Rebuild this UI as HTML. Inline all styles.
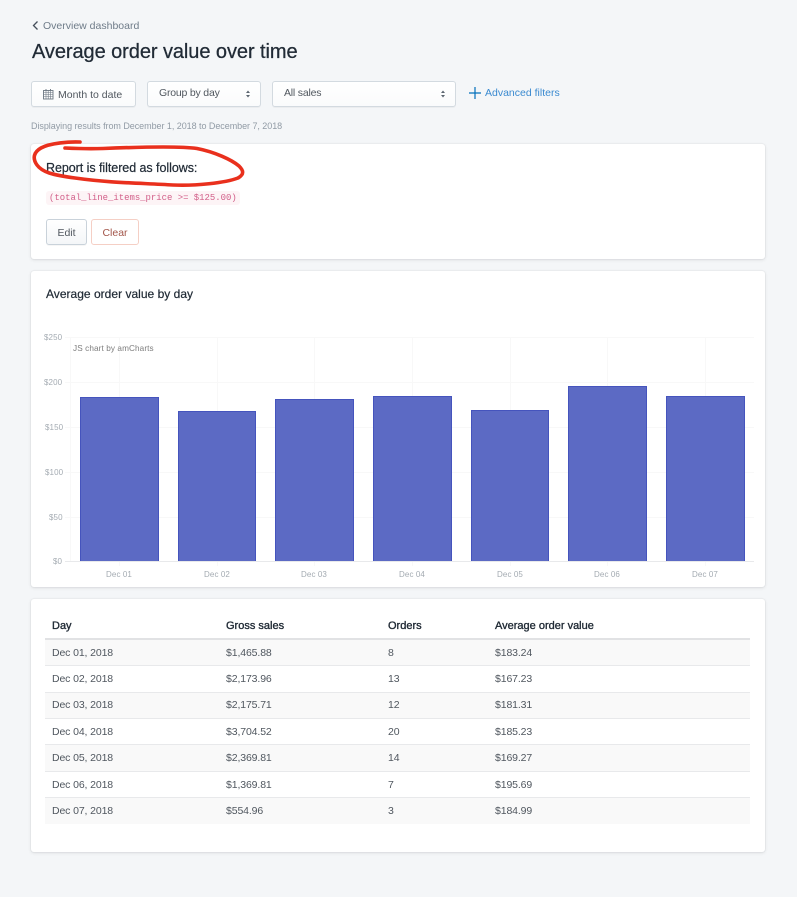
<!DOCTYPE html>
<html><head><meta charset="utf-8">
<style>
html,body{margin:0;padding:0}
body{width:797px;height:897px;background:#f4f6f8;position:relative;overflow:hidden;font-family:"Liberation Sans",sans-serif;color:#454f5b}
.t{position:absolute;white-space:nowrap;line-height:14px}
.card{position:absolute;left:31px;width:734px;background:#fff;border-radius:3px;box-shadow:0 0 0 1px rgba(63,63,68,.03),0 1px 3px 0 rgba(63,63,68,.13)}
.btn{position:absolute;box-sizing:border-box;border:1px solid #d3dae0;border-radius:3px;background:linear-gradient(#fff,#fafbfc);box-shadow:0 1px 0 rgba(22,29,37,.04)}
.h{font-size:11px;color:#212b36;-webkit-text-stroke:.35px #212b36}
.c{font-size:10.5px;color:#50575f;letter-spacing:-.12px}
.ax{font-size:8px;color:#a4abb2;letter-spacing:.1px}
.xl{text-align:center;width:60px}
.bar{position:absolute;box-sizing:border-box;background:#5c6ac4;border:1px solid #4554bd;border-bottom:0;width:78.7px}
.row{position:absolute;left:45px;width:705px;box-sizing:border-box}
.odd{background:#f9f9f9}
.ln{position:absolute;left:45px;width:705px;height:1px;background:#e8e9eb}
.g{position:absolute;background:#f8f8f8}
</style></head><body>

<svg style="position:absolute;left:31px;top:20px" width="10" height="12" viewBox="0 0 10 12"><path d="M6.500 1.500 L2.500 5.500 L6.500 9.500" fill="none" stroke="#454f5b" stroke-width="1.300"/></svg>
<div class="t" style="left:43px;top:19px;font-size:10.5px;color:#6f7c89">Overview dashboard</div>
<div class="t" style="left:32px;top:40px;font-size:20px;line-height:24px;color:#212b36;letter-spacing:-.07px;-webkit-text-stroke:.25px #212b36">Average order value over time</div>

<div class="btn" style="left:31px;top:81px;width:105px;height:26px"></div>
<svg style="position:absolute;left:43px;top:89px" width="11" height="11" viewBox="0 0 11 11"><rect x=".5" y="1.500" width="9.500" height="8.500" fill="none" stroke="#6b7681" stroke-width=".9"/><path d="M.5 3.500h9.500M.5 5.500h9.500M.5 7.500h9.500M3 1.500v8.500M5.200 1.500v8.500M7.500 1.500v8.500" stroke="#6b7681" stroke-width=".6"/><path d="M3 0v2M7.500 0v2" stroke="#6b7681" stroke-width=".9"/></svg>
<div class="t" style="left:58px;top:87.500px;font-size:10.5px;color:#50575f">Month to date</div>

<div class="btn" style="left:147px;top:81px;width:114px;height:26px"></div>
<div class="t" style="left:159px;top:86px;font-size:10.5px;color:#50575f;letter-spacing:-.2px">Group by day</div>
<svg style="position:absolute;left:245px;top:90px" width="6" height="8" viewBox="0 0 6 8"><path d="M3 0.500L5 3H1zM3 7.500L1 5h4z" fill="#5b6570"/></svg>

<div class="btn" style="left:272px;top:81px;width:184px;height:26px"></div>
<div class="t" style="left:284px;top:86px;font-size:10.5px;color:#50575f;letter-spacing:-.2px">All sales</div>
<svg style="position:absolute;left:440px;top:90px" width="6" height="8" viewBox="0 0 6 8"><path d="M3 0.500L5 3H1zM3 7.500L1 5h4z" fill="#5b6570"/></svg>

<svg style="position:absolute;left:469px;top:87px" width="12" height="12" viewBox="0 0 12 12"><path d="M6 0v12M0 6h12" stroke="#006fbb" stroke-width="1.200" fill="none"/></svg>
<div class="t" style="left:485px;top:86px;font-size:10.5px;color:#3a8ad0">Advanced filters</div>

<div class="t" style="left:31px;top:119px;font-size:9px;color:#919ba5;letter-spacing:-.05px">Displaying results from December 1, 2018 to December 7, 2018</div>

<div class="card" style="top:144px;height:115px"></div>
<div class="t" style="left:46px;top:161px;font-size:12.5px;color:#212b36;letter-spacing:-.05px;-webkit-text-stroke:.2px #212b36">Report is filtered as follows:</div>
<div style="position:absolute;left:46px;top:191px;width:194px;height:14px;background:#fdf4f6;border-radius:3px"></div>
<div class="t" style="left:49px;top:191px;font-family:'Liberation Mono',monospace;font-size:8.950px;color:#d2608a">(total_line_items_price &gt;= $125.00)</div>
<div class="btn" style="left:46px;top:219px;width:41px;height:26px;border-color:#c9d2da;background:linear-gradient(#fff,#f4f6f8)"></div>
<div class="t" style="left:46px;top:226px;width:41px;text-align:center;font-size:10.5px;color:#50575f">Edit</div>
<div class="btn" style="left:91px;top:219px;width:48px;height:26px;border-color:#f5cfc5;background:#fff;box-shadow:none"></div>
<div class="t" style="left:91px;top:226px;width:48px;text-align:center;font-size:10.5px;color:#a3564a">Clear</div>

<svg style="position:absolute;left:0;top:0;pointer-events:none" width="797" height="260" viewBox="0 0 797 260"><path d="M80 142 C70 141.500 50 143 41 148 C34 152 32 158 37 165 C42 172 52 175 75 178 C110 183 140 183 173 185 C195 186 225 183 238 178 C245 174 243 170 239 166 C232 160 215 152 197 148.500 C180 146 140 147 103 148.500 C90 149 75 148.500 65 148" fill="none" stroke="#e9301d" stroke-width="3.600" stroke-linecap="round"/></svg>

<div class="card" style="top:271px;height:316px"></div>
<div class="t" style="left:46px;top:287px;font-size:12px;color:#212b36;letter-spacing:.02px;-webkit-text-stroke:.2px #212b36">Average order value by day</div>

<div class="g" style="left:65px;top:337px;width:689px;height:1px"></div>
<div class="g" style="left:65px;top:382px;width:689px;height:1px"></div>
<div class="g" style="left:65px;top:427px;width:689px;height:1px"></div>
<div class="g" style="left:65px;top:472px;width:689px;height:1px"></div>
<div class="g" style="left:65px;top:517px;width:689px;height:1px"></div>
<div class="g" style="left:70px;top:337px;width:1px;height:224px"></div>
<div class="g" style="left:119px;top:337px;width:1px;height:229px"></div>
<div class="g" style="left:217px;top:337px;width:1px;height:229px"></div>
<div class="g" style="left:314px;top:337px;width:1px;height:229px"></div>
<div class="g" style="left:412px;top:337px;width:1px;height:229px"></div>
<div class="g" style="left:510px;top:337px;width:1px;height:229px"></div>
<div class="g" style="left:607px;top:337px;width:1px;height:229px"></div>
<div class="g" style="left:705px;top:337px;width:1px;height:229px"></div>

<div class="bar" style="left:80px;top:397px;height:165px"></div>
<div class="bar" style="left:177.700px;top:411px;height:151px"></div>
<div class="bar" style="left:275.300px;top:399px;height:163px"></div>
<div class="bar" style="left:373px;top:396px;height:166px"></div>
<div class="bar" style="left:470.600px;top:410px;height:152px"></div>
<div class="bar" style="left:568.300px;top:386px;height:176px"></div>
<div class="bar" style="left:666px;top:396px;height:166px"></div>
<div class="g" style="left:65px;top:561px;width:689px;height:1px;background:#e8e9eb"></div>

<div class="t ax" style="left:44px;top:331px">$250</div>
<div class="t ax" style="left:44px;top:376px">$200</div>
<div class="t ax" style="left:45px;top:421px">$150</div>
<div class="t ax" style="left:45px;top:466px">$100</div>
<div class="t ax" style="left:49px;top:511px">$50</div>
<div class="t ax" style="left:53px;top:555px">$0</div>
<div class="t" style="left:73px;top:342px;font-size:8.200px;color:#7d7d7d;letter-spacing:.1px">JS chart by amCharts</div>

<div class="t ax xl" style="left:89px;top:568px">Dec 01</div>
<div class="t ax xl" style="left:187px;top:568px">Dec 02</div>
<div class="t ax xl" style="left:284px;top:568px">Dec 03</div>
<div class="t ax xl" style="left:382px;top:568px">Dec 04</div>
<div class="t ax xl" style="left:480px;top:568px">Dec 05</div>
<div class="t ax xl" style="left:577px;top:568px">Dec 06</div>
<div class="t ax xl" style="left:675px;top:568px">Dec 07</div>

<div class="card" style="top:599px;height:253px"></div>
<div class="t h" style="left:52px;top:619px">Day</div>
<div class="t h" style="left:226px;top:619px">Gross sales</div>
<div class="t h" style="left:388px;top:619px">Orders</div>
<div class="t h" style="left:495px;top:619px">Average order value</div>
<div class="ln" style="top:638px;height:2px;background:#e1e2e4"></div>

<div class="row odd" style="top:640px;height:25px"></div>
<div class="row odd" style="top:692px;height:26px"></div>
<div class="row odd" style="top:745px;height:26px"></div>
<div class="row odd" style="top:798px;height:26px"></div>
<div class="ln" style="top:665px"></div>
<div class="ln" style="top:692px"></div>
<div class="ln" style="top:718px"></div>
<div class="ln" style="top:744px"></div>
<div class="ln" style="top:771px"></div>
<div class="ln" style="top:797px"></div>

<div class="t c" style="left:52px;top:646px">Dec 01, 2018</div><div class="t c" style="left:226px;top:646px">$1,465.88</div><div class="t c" style="left:388px;top:646px">8</div><div class="t c" style="left:495px;top:646px">$183.24</div>
<div class="t c" style="left:52px;top:672px">Dec 02, 2018</div><div class="t c" style="left:226px;top:672px">$2,173.96</div><div class="t c" style="left:388px;top:672px">13</div><div class="t c" style="left:495px;top:672px">$167.23</div>
<div class="t c" style="left:52px;top:698px">Dec 03, 2018</div><div class="t c" style="left:226px;top:698px">$2,175.71</div><div class="t c" style="left:388px;top:698px">12</div><div class="t c" style="left:495px;top:698px">$181.31</div>
<div class="t c" style="left:52px;top:725px">Dec 04, 2018</div><div class="t c" style="left:226px;top:725px">$3,704.52</div><div class="t c" style="left:388px;top:725px">20</div><div class="t c" style="left:495px;top:725px">$185.23</div>
<div class="t c" style="left:52px;top:751px">Dec 05, 2018</div><div class="t c" style="left:226px;top:751px">$2,369.81</div><div class="t c" style="left:388px;top:751px">14</div><div class="t c" style="left:495px;top:751px">$169.27</div>
<div class="t c" style="left:52px;top:778px">Dec 06, 2018</div><div class="t c" style="left:226px;top:778px">$1,369.81</div><div class="t c" style="left:388px;top:778px">7</div><div class="t c" style="left:495px;top:778px">$195.69</div>
<div class="t c" style="left:52px;top:804px">Dec 07, 2018</div><div class="t c" style="left:226px;top:804px">$554.96</div><div class="t c" style="left:388px;top:804px">3</div><div class="t c" style="left:495px;top:804px">$184.99</div>

</body></html>
